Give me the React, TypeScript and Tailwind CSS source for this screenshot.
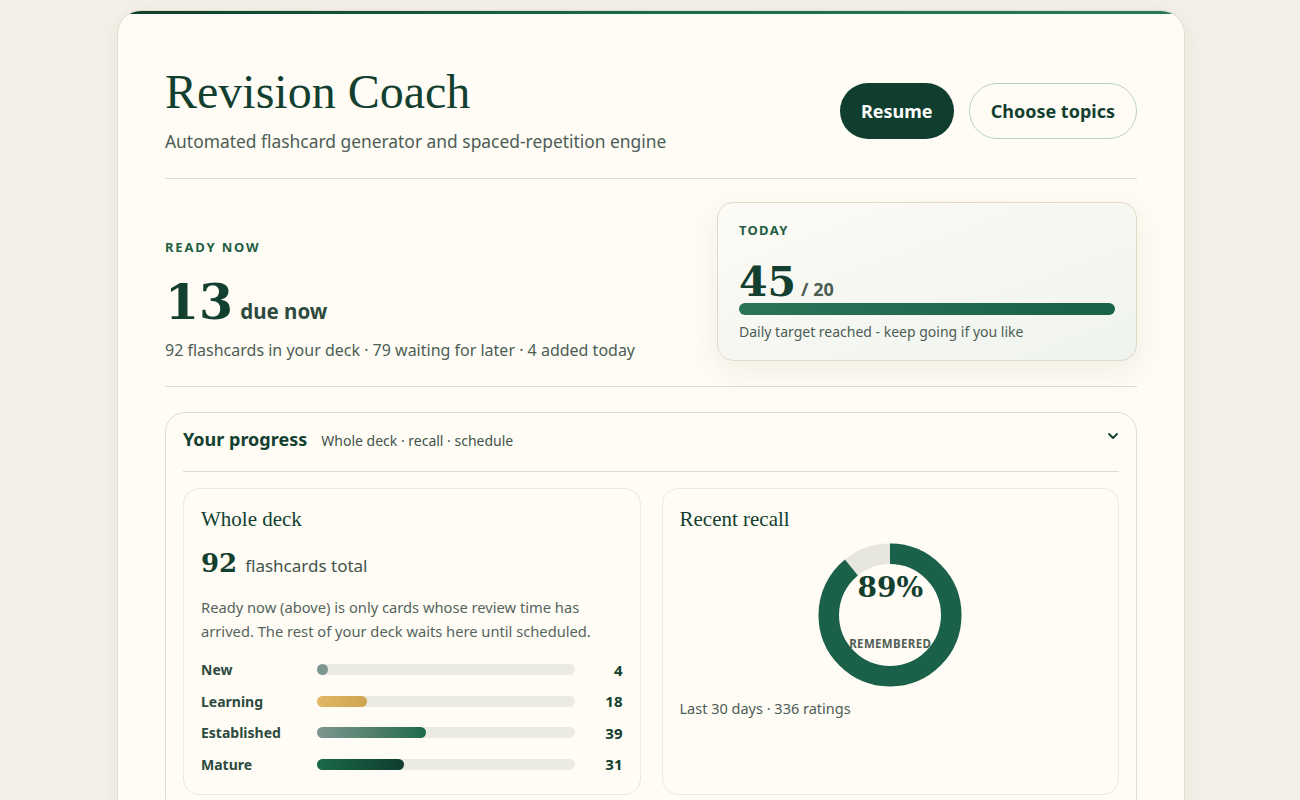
import { ChevronDown } from "lucide-react";

const serif = "font-['Liberation_Serif',Georgia,serif]";
const numeral = "font-['DejaVu_Serif',Georgia,serif]";

const stages = [
  { label: "New", value: 4, fill: "bg-[#7c9690]" },
  { label: "Learning", value: 18, fill: "bg-gradient-to-r from-[#e0b866] to-[#cfa44f]" },
  { label: "Established", value: 39, fill: "bg-gradient-to-r from-[#7c9690] to-[#1b6a4a]" },
  { label: "Mature", value: 31, fill: "bg-gradient-to-r from-[#1b6a4a] to-[#0f3d2e]" },
];

const total = 92;

const RecallDonut = ({ percent }: { percent: number }) => {
  const r = 61.25;
  const c = 2 * Math.PI * r;
  const remembered = (percent / 100) * c;
  return (
    <div className="relative mx-auto h-[144px] w-[144px]">
      <svg viewBox="0 0 144 144" className="h-full w-full">
        <circle cx="72" cy="72" r={r} fill="none" stroke="#e6e6df" strokeWidth="20.5" />
        <circle
          cx="72"
          cy="72"
          r={r}
          fill="none"
          stroke="#1b6049"
          strokeWidth="20.5"
          strokeDasharray={`${remembered} ${c}`}
          transform="rotate(-90 72 72)"
        />
      </svg>
      <div className="absolute inset-0 flex flex-col items-center pt-[31px]">
        <span className={`${numeral} text-[28px] font-bold leading-none text-[#123f30]`}>{percent}%</span>
        <span className="mt-[33px] text-[11.5px] font-bold uppercase tracking-[0.03em] text-[#4f5d56]">Remembered</span>
      </div>
    </div>
  );
};

const App = () => {
  return (
    <div className="min-h-screen bg-[#f3f0e8] pt-[10px] font-['Noto_Sans',sans-serif] text-[#123f30]">
      <div className="ml-[117px] w-[1068px] overflow-hidden rounded-[24px] border border-[#e2dccd] bg-[#fffcf5] shadow-[0_4px_20px_rgba(60,50,30,0.06)]">
        {/* Top accent */}
        <div className="h-[3px] bg-gradient-to-r from-[#0f3d2e] via-[#1b6a4a] to-[#2a7a58]"></div>

        <div className="px-[47px] pb-10">
          {/* Header */}
          <div className="flex items-start justify-between border-b border-[#e0dccf] pb-[24px] pt-[52px]">
            <div>
              <h1 className={`${serif} text-[48px] leading-[52px] text-[#123f30]`}>Revision Coach</h1>
              <p className="mt-[10px] text-[17.4px] text-[#4c5d55]">Automated flashcard generator and spaced-repetition engine</p>
            </div>
            <div className="mt-[17px] flex gap-[15px]">
              <button className="h-[56px] rounded-full bg-[#0f3d2e] px-[21px] text-[18px] font-bold text-white">Resume</button>
              <button className="h-[56px] rounded-full border border-[#b9cfcb] bg-[#fffcf5] px-[21px] text-[18px] font-bold text-[#123f30]">
                Choose topics
              </button>
            </div>
          </div>

          {/* Ready now / today */}
          <div className="flex items-start justify-between border-b border-[#e0dccf] pb-[24px] pt-[23px]">
            <div className="pt-[36px]">
              <div className="text-[13px] font-bold tracking-[0.14em] text-[#1f5e45]">READY NOW</div>
              <div className="mt-[19px] flex items-baseline gap-[7px]">
                <span className={`${numeral} text-[49px] font-bold leading-[50px] text-[#123f30]`}>13</span>
                <span className="text-[20.5px] font-bold text-[#2d4a3e]">due now</span>
              </div>
              <p className="mt-[11px] text-[16px] text-[#4c5d55]">92 flashcards in your deck · 79 waiting for later · 4 added today</p>
            </div>
            <div className="w-[420px] rounded-[16px] border border-[#e2d9c6] bg-gradient-to-br from-[#fdfbf5] to-[#eff3ee] px-[21px] pb-[18px] pt-[18px] shadow-[0_10px_30px_rgba(80,70,40,0.08)]">
              <div className="text-[13px] font-bold tracking-[0.1em] text-[#1f5e45]">TODAY</div>
              <div className="mt-[20px] flex items-baseline gap-[5px]">
                <span className={`${numeral} text-[41px] font-bold leading-[42px] text-[#123f30]`}>45</span>
                <span className="text-[18px] font-bold text-[#4c5d55]">/ 20</span>
              </div>
              <div className="h-[12px] rounded-full bg-gradient-to-r from-[#2a7458] to-[#1b6049]"></div>
              <p className="mt-[6.5px] text-[14px] text-[#4c5d55]">Daily target reached - keep going if you like</p>
            </div>
          </div>

          {/* Progress */}
          <div className="mt-[25px] rounded-[20px] border border-[#e2dccd] px-[17px]">
            <div className="flex items-center justify-between border-b border-[#e0dccf] pb-[18px] pt-[13px]">
              <div className="flex items-baseline gap-[14px]">
                <span className="text-[18px] font-bold text-[#123f30]">Your progress</span>
                <span className="text-[14px] text-[#3f534a]">Whole deck · recall · schedule</span>
              </div>
              <ChevronDown className="-mr-[2px] -mt-[6px] h-[16px] w-[16px] text-[#123f30]" strokeWidth={2.75} />
            </div>

            <div className="grid grid-cols-2 gap-[21px] pb-5 pt-[16px]">
              {/* Whole deck */}
              <div className="rounded-[16px] border border-[#ece9df] px-[17px] pb-[19px] pt-[15px]">
                <h2 className={`${serif} text-[21px] text-[#123f30]`}>Whole deck</h2>
                <div className="mt-[15px] flex items-baseline gap-[8px]">
                  <span className={`${numeral} text-[26px] font-bold leading-none text-[#123f30]`}>92</span>
                  <span className="text-[17px] text-[#3f534a]">flashcards total</span>
                </div>
                <p className="mt-[16px] text-[14.7px] leading-[24px] text-[#55645d]">
                  Ready now (above) is only cards whose review time has arrived. The rest of your deck waits here until scheduled.
                </p>
                <div className="mt-[16px] flex flex-col gap-[9.5px]">
                  {stages.map((s) => (
                    <div key={s.label} className="grid h-[22px] grid-cols-[116px_1fr_48px] items-center">
                      <span className="text-[14px] font-bold text-[#2d4a3e]">{s.label}</span>
                      <div className="h-[11px] rounded-full bg-[#ebebe4]">
                        <div className={`h-full rounded-full ${s.fill}`} style={{ width: `${(s.value / total) * 100}%` }}></div>
                      </div>
                      <span className="text-right text-[15px] font-bold text-[#123f30]">{s.value}</span>
                    </div>
                  ))}
                </div>
              </div>

              {/* Recent recall */}
              <div className="rounded-[16px] border border-[#ece9df] px-[17px] pb-[18px] pt-[15px]">
                <h2 className={`${serif} text-[21px] text-[#123f30]`}>Recent recall</h2>
                <div className="mt-[7.5px]">
                  <RecallDonut percent={89} />
                </div>
                <p className="mt-[11px] text-[14.5px] text-[#4c5d55]">Last 30 days · 336 ratings</p>
              </div>
            </div>
          </div>
        </div>
      </div>
    </div>
  );
};

export default App;
